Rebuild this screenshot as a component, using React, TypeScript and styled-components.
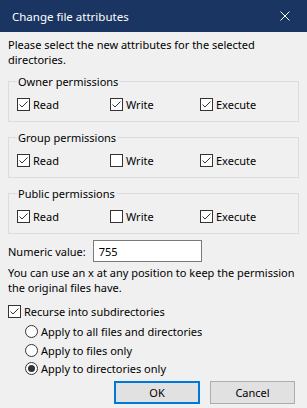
import React, { useState } from 'react';
import styled, { createGlobalStyle } from 'styled-components';

const GlobalStyle = createGlobalStyle`
    html, body {
        margin: 0;
        padding: 0;
        background: #f0f0f0;
    }
    body {
        font-family: 'Noto Sans', 'Open Sans', sans-serif;
        font-size: 11px;
        color: #000;
    }
`;

const Window = styled.div`
    width: 307px;
    height: 408px;
    background: #f0f0f0;
    display: flex;
    flex-direction: column;
    overflow: hidden;
`;

const TitleBar = styled.div`
    height: 32px;
    flex-shrink: 0;
    background: #1b3562;
    color: #fff;
    display: flex;
    align-items: center;
    justify-content: space-between;
    padding: 0 12px 0 12px;
`;

const Title = styled.span`
    font-size: 11.5px;
`;

const CloseButton = styled.span`
    width: 10px;
    height: 10px;
    display: flex;
    margin-right: 5px;
`;

const Body = styled.div`
    padding: 5px 8px 0 8px;
    display: flex;
    flex-direction: column;
`;

const Paragraph = styled.p<{ $top?: number }>`
    margin: ${(p) => p.$top ?? 0}px 0 0 0;
    line-height: 15px;
`;

const Group = styled.fieldset<{ $top: number }>`
    margin: ${(p) => p.$top}px 0 0 0;
    padding: 8px 8px 9px 8px;
    border: 1px solid #dcdcdc;
    min-width: 0;
`;

const Legend = styled.legend`
    padding: 0 1px;
    line-height: 15px;
`;

const PermRow = styled.div`
    display: grid;
    grid-template-columns: 93px 90px 1fr;
`;

const Option = styled.label<{ $indent?: number; $top?: number }>`
    display: flex;
    align-items: center;
    gap: 3px;
    line-height: 15px;
    padding-left: ${(p) => p.$indent ?? 0}px;
    margin-top: ${(p) => p.$top ?? 0}px;
`;

const Box = styled.span`
    width: 11px;
    height: 11px;
    border: 1px solid #333;
    background: #fff;
    display: flex;
    align-items: center;
    justify-content: center;
    flex-shrink: 0;
`;

const Radio = styled.span<{ $on: boolean }>`
    width: 11px;
    height: 11px;
    border: 1px solid #333;
    border-radius: 50%;
    background: #fff;
    flex-shrink: 0;
    display: flex;
    align-items: center;
    justify-content: center;
    &::after {
        content: '';
        width: 7px;
        height: 7px;
        border-radius: 50%;
        background: ${(p) => (p.$on ? '#333' : 'transparent')};
    }
`;

const NumericRow = styled.div`
    display: flex;
    align-items: center;
    margin-top: 6px;
    gap: 7px;
`;

const NumberInput = styled.input`
    width: 109px;
    height: 22px;
    box-sizing: border-box;
    border: 1px solid #7a7a7a;
    background: #fff;
    padding: 0 5px;
    font: inherit;
    outline: none;
`;

const Radios = styled.div`
    display: flex;
    flex-direction: column;
    gap: 3.5px;
    margin-top: 5px;
`;

const Buttons = styled.div`
    display: flex;
    justify-content: flex-end;
    gap: 10px;
    margin-top: 5px;
    padding-right: 4px;
`;

const Button = styled.button<{ $primary?: boolean }>`
    height: 23px;
    width: ${(p) => (p.$primary ? 86 : 85)}px;
    box-sizing: border-box;
    background: #e1e1e1;
    border: ${(p) => (p.$primary ? '2px solid #0078d7' : '1px solid #adadad')};
    font: inherit;
    color: #000;
    padding: 0;
`;

function Check({ on }: { on: boolean }): JSX.Element {
    return (
        <Box>
            {on && (
                <svg width="9" height="9" viewBox="0 0 9 9">
                    <polyline points="0.5,4.5 3,7 8.5,1.5" fill="none" stroke="#333" strokeWidth="1" />
                </svg>
            )}
        </Box>
    );
}

function PermGroup({ title, perms, top }: { title: string; perms: boolean[]; top: number }): JSX.Element {
    const labels = ['Read', 'Write', 'Execute'];
    return (
        <Group $top={top}>
            <Legend>{title}</Legend>
            <PermRow>
                {labels.map((l, i) => (
                    <Option key={l}>
                        <Check on={perms[i]} />
                        {l}
                    </Option>
                ))}
            </PermRow>
        </Group>
    );
}

function App(): JSX.Element {
    const [mode] = useState(2);
    const modes = ['Apply to all files and directories', 'Apply to files only', 'Apply to directories only'];

    return (
        <Window>
            <GlobalStyle />
            <TitleBar>
                <Title>Change file attributes</Title>
                <CloseButton>
                    <svg width="10" height="10" viewBox="0 0 10 10">
                        <path d="M0.5 0.5 L9.5 9.5 M9.5 0.5 L0.5 9.5" stroke="#fff" strokeWidth="1" />
                    </svg>
                </CloseButton>
            </TitleBar>
            <Body>
                <Paragraph>Please select the new attributes for the selected directories.</Paragraph>
                <PermGroup title="Owner permissions" perms={[true, true, true]} top={7} />
                <PermGroup title="Group permissions" perms={[true, false, true]} top={8} />
                <PermGroup title="Public permissions" perms={[true, false, true]} top={8} />
                <NumericRow>
                    <span>Numeric value:</span>
                    <NumberInput defaultValue="755" />
                </NumericRow>
                <Paragraph $top={3}>
                    You can use an x at any position to keep the permission the original files have.
                </Paragraph>
                <Option $top={9}>
                    <Check on={true} />
                    Recurse into subdirectories
                </Option>
                <Radios>
                    {modes.map((m, i) => (
                        <Option key={m} $indent={17}>
                            <Radio $on={i === mode} />
                            {m}
                        </Option>
                    ))}
                </Radios>
                <Buttons>
                    <Button $primary>OK</Button>
                    <Button>Cancel</Button>
                </Buttons>
            </Body>
        </Window>
    );
}

export default App;
